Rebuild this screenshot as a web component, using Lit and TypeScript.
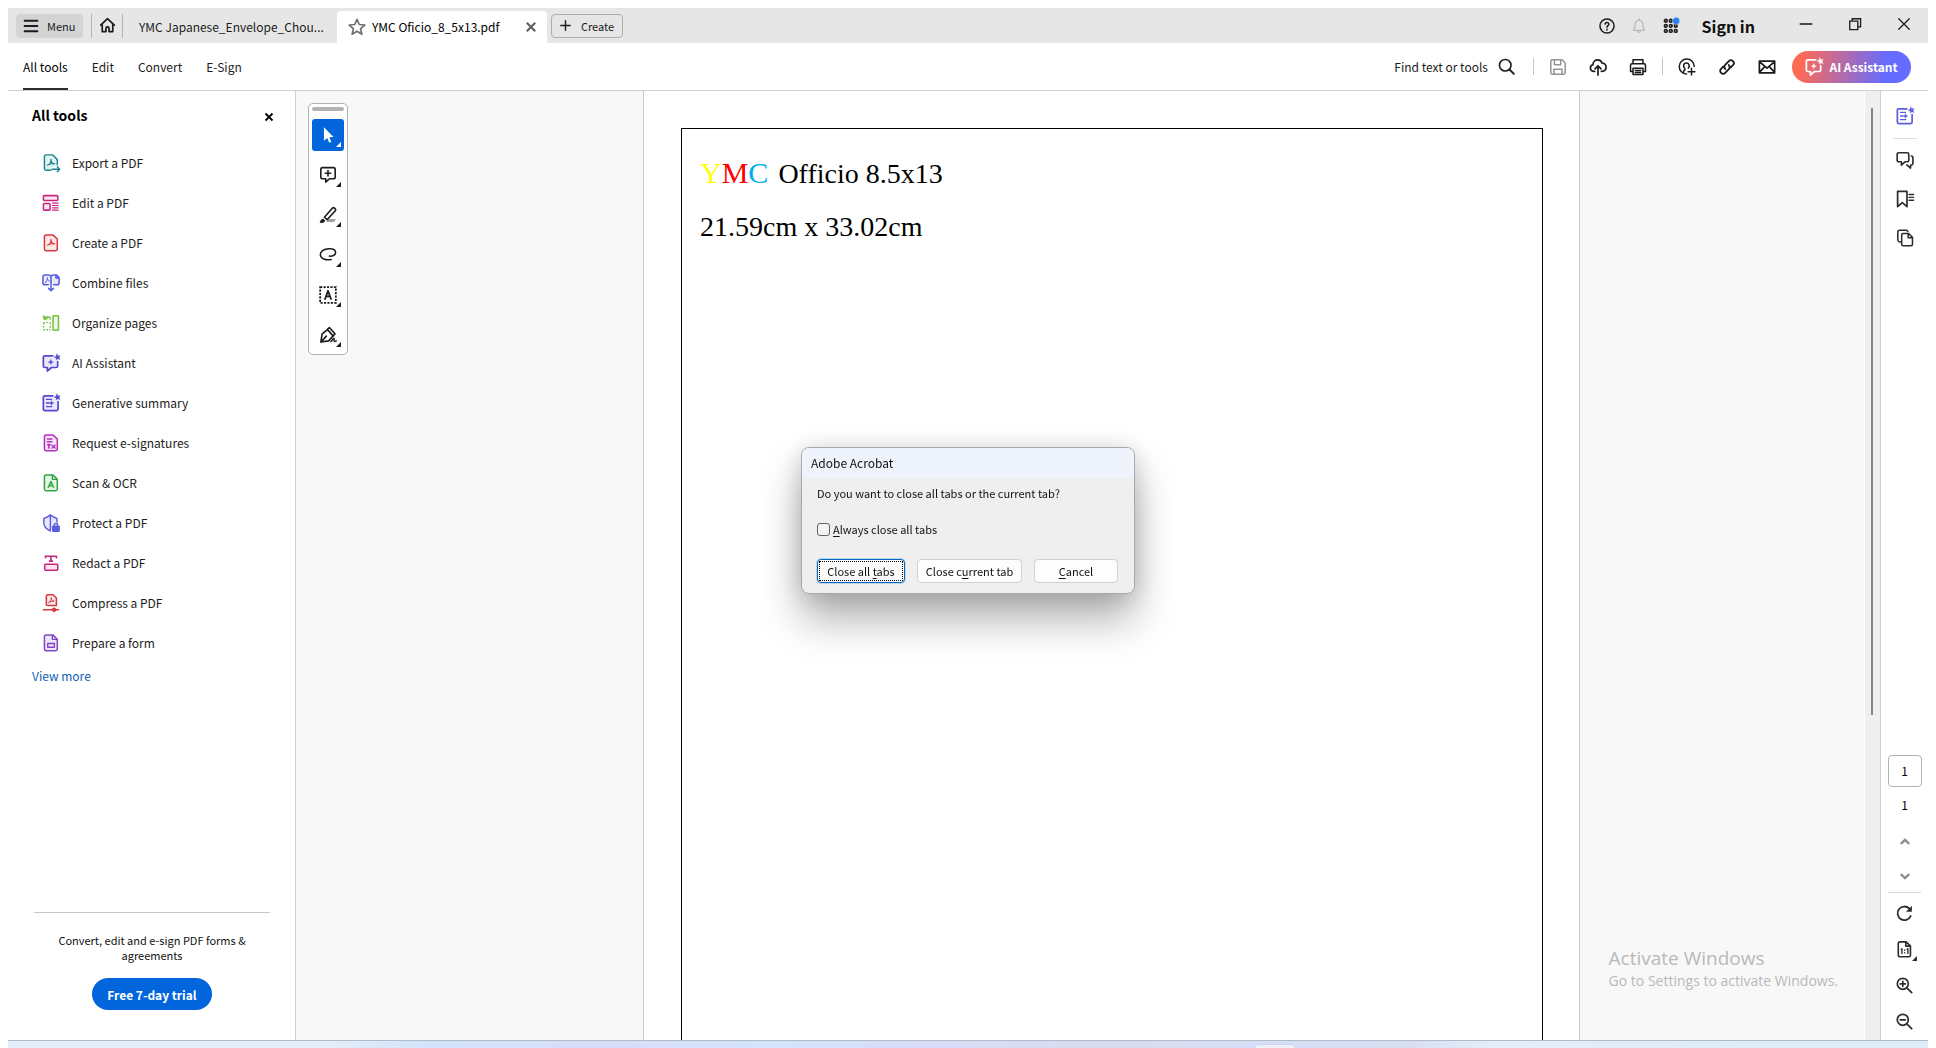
import { LitElement, html, css, svg } from "lit";
import { customElement, property } from "lit/decorators.js";
import { classMap } from "lit/directives/class-map.js";

/* Icons are drawn on a 20 x 20 grid and take their colour from the text colour. */
const pdfMark = svg`<path d="M6 12.5c2.6-.8 4-3.300 4-6.500M10 6c0 2.500 1.400 4.500 4.200 5M6 12.500c2.400-1.400 5.200-2 8.200-1.500" fill="none" stroke-width="1.300"/>`;
const sparkle = svg`<path d="M16.600 0l1 2.200L20 1.600l-1 2.300 1 2.200-2.300-.8-1.800 1.400-.1-2.400-2.400-.8 2.100-1.100z" fill="currentColor" stroke="currentColor" stroke-width=".5"/>`;

const ICONS: Record<string, unknown> = {
  menu: svg`<path d="M2 3.500h16M2 10h16M2 16.500h16" stroke-width="2.400"/>`,
  home: svg`<path d="M2 9.500L10 2l8 7.500M3.800 8v9.200h4.400v-3.700a1.800 1.800 0 0 1 3.600 0v3.700h4.400V8" stroke-width="2"/>`,
  star: svg`<path d="M10 1.500l2.500 5.700 6.200.6-4.700 4.100 1.400 6.100L10 14.800 4.600 18 6 11.900 1.300 7.800l6.200-.6z" stroke-width="1.900"/>`,
  close: svg`<path d="M3 3l14 14M17 3L3 17" stroke-width="3.600" stroke-linecap="butt"/>`,
  thinclose: svg`<path d="M2.500 2.500l15 15M17.500 2.500l-15 15" stroke-width="1.900"/>`,
  plus: svg`<path d="M10 1.500v17M1.500 10h17" stroke-width="2.600"/>`,
  help: svg`<circle cx="10" cy="10" r="8.800" stroke-width="1.900"/><path d="M7.600 7.600c.3-2.600 4.900-2.500 4.700.2-.1 1.800-2.300 1.700-2.300 3.800M10 14.200v.8" stroke-width="1.900"/>`,
  bell: svg`<path d="M3 15.500c1.700-1.700 1.900-3.500 1.900-6.500 0-3.500 2-5.700 5.100-6.400 3.100.7 5.100 2.900 5.100 6.400 0 3 .2 4.800 1.900 6.500zM8 16c.2 2.600 3.800 2.600 4 0M10 1v1.600" stroke-width="1.800"/>`,
  grid: svg`<g stroke-width="2.100"><circle cx="3.500" cy="3.500" r="1.700"/><circle cx="9.700" cy="3.500" r="1.700"/><circle cx="3.500" cy="9.800" r="1.700"/><circle cx="9.700" cy="9.800" r="1.700"/><circle cx="15.900" cy="9.800" r="1.700"/><circle cx="3.500" cy="16.100" r="1.700"/><circle cx="9.700" cy="16.100" r="1.700"/><circle cx="15.900" cy="16.100" r="1.700"/></g><circle cx="16.500" cy="3.600" r="4.500" fill="#2680eb" stroke="#e6e6e6" stroke-width=".6"/>`,
  minimize: svg`<path d="M1 10h18" stroke-width="2.200" stroke-linecap="butt"/>`,
  restore: svg`<path d="M2.500 6h11.500v12H2.500zM6 6V2.500h12v11.500h-4" stroke-width="1.900" stroke-linejoin="miter"/>`,
  search: svg`<circle cx="8.500" cy="8.500" r="6.800" stroke-width="1.900"/><path d="M13.500 13.500l5.200 5.200" stroke-width="2.200"/>`,
  save: svg`<path d="M2 3.500Q2 2 3.500 2h11L18 5.500v11q0 1.500-1.500 1.500h-13Q2 18 2 16.500zM6 2v5.500h7V2M5.500 18v-5.500h9V18" stroke-width="1.700"/>`,
  cloud: svg`<path d="M6.300 14.800H5a3.700 3.700 0 0 1-.6-7.300C4.500 3.900 7.100 2 9.700 2c2.300 0 4.200 1.400 4.800 3.700 2.700 0 4.500 2 4.500 4.400 0 2.700-1.900 4.700-4.600 4.700h-.7M10 19V9M6.700 12L10 8.600l3.300 3.400" stroke-width="1.900"/>`,
  print: svg`<path d="M4.500 6.500V2h11v4.500M4.500 15H1.700V8q0-1.500 1.500-1.500h13.600q1.500 0 1.500 1.500v7h-2.800M4.500 11.500h11v6.800h-11zM7 14h6M7 16h6" stroke-width="1.700"/>`,
  share: svg`<path d="M9.500 17.800A8.300 8.300 0 1 1 18 9.500M6.300 15.500v-1.200c2-.9 1.800-1.700 1-2.800-1.900-2.700-1.200-6 2-6s4 3.300 2.200 5.700M15 11.500v7.500M11.200 15.300h7.600" stroke-width="1.700"/>`,
  link: svg`<path d="M8 12.200c-1.500-1.600-1.300-3.300 0-4.600l4-4.100c1.400-1.400 3.300-1.300 4.600 0s1.400 3.100 0 4.500l-2.300 2.400M12 7.800c1.500 1.600 1.300 3.300 0 4.600l-4 4.100c-1.400 1.400-3.300 1.300-4.600 0S2 13.400 3.400 12l2.300-2.400" stroke-width="2"/>`,
  mail: svg`<path d="M1.500 3.500h17v13h-17zM1.500 4l8.500 7.300L18.500 4M1.500 16l6-6.500M18.500 16l-6-6.500" stroke-width="1.900"/>`,
  ai: svg`<path d="M12 2H3.200Q1.500 2 1.500 3.700v9.600Q1.500 15 3.200 15H6v4l4.500-4h5.200q1.700 0 1.700-1.700V8.500" stroke-width="1.900" fill="var(--tint, none)"/><path d="M9.800 6.500l.7 1.900 2 .6-2 .8-.7 1.900-.8-1.900-2-.8 2-.6z" fill="currentColor" stroke-width=".6"/>${sparkle}`,
  summary: svg`<path d="M12 2H3.200Q1.500 2 1.500 3.700v13.100q0 1.700 1.700 1.700h13q1.700 0 1.700-1.700V8.500" stroke-width="1.900" fill="var(--tint, none)"/><path d="M5 6h5.500M5 10h2.500M5 14h6" stroke-width="1.500"/><path d="M10.500 7.700l.8 1.700 1.900.6-1.900.8-.8 1.800-.8-1.800-1.900-.8 1.900-.6z" fill="currentColor" stroke-width=".5"/>${sparkle}`,
  export: svg`<path d="M10 18H4.500Q2.700 18 2.700 16.200V2.800Q2.700 1 4.500 1H12l5 5v6" stroke-width="1.600" fill="var(--tint)"/>${pdfMark}<path d="M11.500 17h8M17 14.300l2.600 2.700-2.600 2.700" stroke-width="1.600"/>`,
  edit: svg`<rect x="1.600" y="1.800" width="16" height="5.400" rx="1" fill="var(--tint)"/><rect x="1.600" y="10.500" width="7.400" height="7.400" rx="1" fill="var(--tint)"/><path d="M11.700 10.200h6.300M11.700 12.800h6.300M11.700 15.400h6.300M11.700 18h6.300" stroke-width="1.300"/>`,
  pdf: svg`<path d="M4.500 1H12l5 4.500v11.200q0 1.800-1.800 1.800H4.500q-1.800 0-1.800-1.800V2.800Q2.700 1 4.500 1z" fill="var(--tint)"/>${pdfMark}`,
  combine: svg`<path d="M7 12H3Q1 12 1 10V3Q1 1 3 1h4.500Q9 1 10 2.500 11 1 12.500 1H16l3 3v6q0 2-2 2h-4M15.500 1.200v3.300H19" fill="var(--tint)"/><path d="M3.500 9.500c1.600-.6 2.500-2.200 2.500-5M6 4.500c0 2 1 3 2.200 3.500" stroke-width="1"/><path d="M10 3v15.500M7.300 16l2.700 2.700 2.700-2.700"/>`,
  organize: svg`<rect x="12.300" y="2" width="6" height="16" rx=".6" fill="var(--tint)"/><path d="M1.500 9.500h8M1.500 17.500h8M1.800 10v7.500M9.300 10v7.500" stroke-dasharray="1.800 1.600" stroke-width="1.500" stroke-linecap="butt"/><path d="M9.500 5.500c-1-3-4.500-3.300-6.500-.5" stroke-width="1.700"/><path d="M1.300 2.200l1 4.200 3.900-1.200z" fill="currentColor" stroke-width="1"/>`,
  sign: svg`<path d="M4.500 1H12l5 4.500v11.200q0 1.800-1.800 1.800H4.500q-1.800 0-1.800-1.800V2.800Q2.700 1 4.500 1z" fill="var(--tint)"/><path d="M6 5.500h5M6 8.500h5M7.700 11.500v4.200M6.200 12h3M11.200 12.500l3.300 3M14.500 12.500l-3.300 3" stroke-width="1.700"/>`,
  scan: svg`<path d="M4.500 1H12l5 5v10.700q0 1.800-1.800 1.800H4.500q-1.800 0-1.800-1.800V2.800Q2.700 1 4.500 1z" fill="var(--tint)"/><path d="M11.500 1.500V6H17M6.800 15L9.900 8.200 13 15M7.800 13h4.200" stroke-width="1.500"/>`,
  shield: svg`<path d="M9.300 19C4 16.500 2 13.500 2 9.500V4.800C4.800 4 7 3 9.300 1c2.300 2 4.500 3 7.300 3.800V9M9.300 1v18" stroke-width="1.600" fill="var(--tint)"/><path d="M13.500 14v-1.400a2 2 0 0 1 4 0V14" stroke-width="1.500"/><rect x="12" y="13.600" width="7" height="5.600" rx=".7" fill="currentColor"/>`,
  redact: svg`<path d="M4 4V2.500h12V4M10 2.500v5.200M8.500 8h3" stroke-width="1.900" stroke-linejoin="miter"/><rect x="3" y="11.500" width="14.500" height="6.500" rx="1" fill="var(--tint)"/>`,
  compress: svg`<path d="M6.300.9h6l3.700 3.500v8.400H6.300q-1.500 0-1.500-1.500V2.400Q4.800.9 6.300.9z" fill="var(--tint)"/><path d="M7.600 9.500c1.800-.8 2.700-2.500 2.600-5M10.200 4.500c.1 2 1.200 3 2.900 3.500M7.600 9.500C9 8.400 11 7.800 13.100 8" stroke-width="1"/><path d="M1.500 17.500h17M13 15.700l-2 1.800 2 1.800M14 15.700l2 1.800-2 1.800" stroke-width="1.500"/>`,
  form: svg`<path d="M4.500 1H12l5 5v10.700q0 1.800-1.800 1.800H4.500q-1.800 0-1.800-1.800V2.800Q2.700 1 4.500 1z" fill="var(--tint)"/><path d="M11.500 1.500V6H17M6.300 10.500h7.500v4.200H6.300z" stroke-width="1.500"/>`,
  pointer: svg`<path d="M5.500 1.500v15l3.600-3.200 2.300 5.200 2.300-1-2.300-5 4.700-.3z" fill="currentColor" stroke="none"/>`,
  comment: svg`<path d="M4 1.800h12q2 0 2 2v8.400q0 2-2 2h-4.500L7.500 18v-3.800H4q-2 0-2-2V3.800q0-2 2-2zM10 5v6M7 8h6" stroke-width="1.800"/>`,
  marker: svg`<path d="M8 17.800L11 14.500h8l-2.500 3.300z" fill="#a0a0a0" stroke="none"/><path d="M6 12.500L15 2.300q1-1 2.200 0l.9.900q1 1 0 2.100L9 15.300zM6 12.500l3 2.800" stroke-width="1.800"/><path d="M1.500 18l1-2.500 2-1 2 2-1.500 1.500z" fill="currentColor" stroke-width="1"/>`,
  lasso: svg`<path d="M11.500 11.200c3 .4 7-.9 7-4 0-3.700-4.500-4.600-8-4.100C5 3.800 1.500 6.500 1.500 9.800c0 4.300 6 6.200 12 5.200" stroke-width="1.700"/>`,
  textbox: svg`<rect x="1.300" y="1.300" width="17.400" height="17.400" stroke-dasharray="2.400 1.400" stroke-linecap="butt" stroke-width="2" stroke-linejoin="miter"/><path d="M6.700 14.500L10 5.300l3.300 9.200M7.900 11.500h4.200" stroke-width="2"/>`,
  pen: svg`<path d="M2 17.800l1.500-9L9.500 4l6.200 7-5 5.500zM2.200 17.600l6-6.400M8.800 4.200l2.700-2.500 6.300 7-2 2.400" stroke-width="1.800"/><path d="M13 17.500c2-1 2.500-4 3.500-4s-.5 3.500.5 3.700 1.500-.7 2.500-.7" stroke-width="1.500"/>`,
  chats: svg`<path d="M3 2h9.500q1.700 0 1.700 1.700v6.600q0 1.700-1.700 1.700H10l-4 3.700V12H3q-1.700 0-1.700-1.700V3.700Q1.300 2 3 2zM17 5.500q1.800 0 1.800 1.700v6.600q0 1.700-1.800 1.700h-.8V19L12 15.500" stroke-width="1.800"/>`,
  bookmark: svg`<path d="M1.800 1.500h10.400v17L7 14l-5.200 4.500z" stroke-width="1.900"/><path d="M14.500 5h5M14.500 8.200h5M14.500 11.400h5" stroke-width="1.500"/>`,
  copies: svg`<path d="M5.500 14.500H4.300Q2.300 14.500 2 12.500V3.500q0-2 2-2h7q1.500 0 2.300 1.200M8 5h6l4.300 4.300V17q0 1.700-1.700 1.700H8q-1.700 0-1.700-1.700V6.700Q6.300 5 8 5zM13.500 5v4.800h4.800" stroke-width="1.700"/>`,
  up: svg`<path d="M3 13l7-6.500 7 6.500" stroke-width="4" stroke-linecap="butt" stroke-linejoin="miter"/>`,
  down: svg`<path d="M3 7l7 6.500L17 7" stroke-width="4" stroke-linecap="butt" stroke-linejoin="miter"/>`,
  rotate: svg`<path d="M17.200 13a8 8 0 1 1-1.500-8.700" stroke-width="2.100"/><path d="M18.700 1v7h-7z" fill="currentColor" stroke="none"/>`,
  actual: svg`<path d="M4.500 1H12l5 5v10.700q0 1.800-1.800 1.800H4.500q-1.800 0-1.800-1.800V2.800Q2.700 1 4.500 1zM11.500 1.500V6H17" stroke-width="1.900"/><path d="M6 9.700l1-.5v5.600M13 9.700l1-.5v5.600M10.200 10.500v.4M10.200 13.600v.4" stroke-width="1.600"/>`,
  zoomin: svg`<circle cx="8" cy="8" r="6.500" stroke-width="2"/><path d="M13 13l5.500 5.500M8 5v6M5 8h6" stroke-width="2"/>`,
  zoomout: svg`<circle cx="8" cy="8" r="6.500" stroke-width="2"/><path d="M13 13l5.500 5.500M5 8h6" stroke-width="2"/>`,
};

@customElement("app-icon")
class AppIcon extends LitElement {
  static styles = css`
    :host { display: inline-flex; flex: none; width: 18px; height: 18px; }
    .glyph {
      width: 100%; height: 100%; overflow: visible;
      fill: none; stroke: currentColor; stroke-width: 1.700;
      stroke-linecap: round; stroke-linejoin: round;
    }
  `;
  @property() name = "";
  render() {
    return html`<svg class="glyph" viewBox="0 0 20 20" aria-hidden="true">${ICONS[this.name]}</svg>`;
  }
}

const TOOLS = [
  { label: "Export a PDF", icon: "export", tone: "teal" },
  { label: "Edit a PDF", icon: "edit", tone: "pink" },
  { label: "Create a PDF", icon: "pdf", tone: "red" },
  { label: "Combine files", icon: "combine", tone: "indigo" },
  { label: "Organize pages", icon: "organize", tone: "lime" },
  { label: "AI Assistant", icon: "ai", tone: "violet" },
  { label: "Generative summary", icon: "summary", tone: "violet" },
  { label: "Request e-signatures", icon: "sign", tone: "magenta" },
  { label: "Scan & OCR", icon: "scan", tone: "green" },
  { label: "Protect a PDF", icon: "shield", tone: "indigo" },
  { label: "Redact a PDF", icon: "redact", tone: "pink" },
  { label: "Compress a PDF", icon: "compress", tone: "red" },
  { label: "Prepare a form", icon: "form", tone: "purple" },
];

const QUICK_TOOLS = [
  { label: "Select", icon: "pointer" },
  { label: "Add comment", icon: "comment" },
  { label: "Highlight", icon: "marker" },
  { label: "Draw freeform", icon: "lasso" },
  { label: "Text box", icon: "textbox" },
  { label: "Sign", icon: "pen" },
];

@customElement("app-root")
class AppRoot extends LitElement {
  static styles = css`
    :host {
      display: block;
      font-family: "Noto Sans CJK SC", "Open Sans", sans-serif;
      font-size: 12px;
      line-height: 16px;
      color: #1c1c1c;
      background: #fff;
    }
    *, *::before, *::after { box-sizing: border-box; }
    button, input { font: inherit; color: inherit; margin: 0; }
    button { background: none; border: 0; padding: 0; cursor: pointer; white-space: nowrap; }
    a { color: inherit; text-decoration: none; }
    h2, p { margin: 0; }
    .icon-button { display: inline-flex; align-items: center; justify-content: center; }

    .window { min-height: 100vh; padding: 8px 8px 0; display: flex; flex-direction: column; }

    .titlebar { display: flex; height: 35px; background: #e6e6e6; padding-left: 8px; align-items: center; }
    .menu {
      display: flex; align-items: center; gap: 8px; height: 24px; width: 67px;
      padding-left: 7px; margin-right: 8px; border-radius: 4px; background: #d4d4d4; font-size: 11px;
    }
    .menu app-icon { width: 16px; height: 16px; }
    .home { width: 32px; height: 24px; border: solid #b5b5b5; border-width: 0 1px; }
    .home app-icon { width: 17px; height: 17px; }
    .tab { width: 214px; height: 32px; text-align: left; padding-left: 16px; align-self: flex-end; }
    .tab-active {
      display: flex; align-items: center; gap: 6px; width: 210px; height: 32px; align-self: flex-end;
      padding: 0 10px 0 11px; background: #fff; border-radius: 4px 4px 0 0; color: #000; white-space: nowrap;
    }
    .tab-active > app-icon { width: 18px; height: 18px; color: #707070; }
    .tab-title { flex: 1; }
    .tab-close { color: #606060; width: 12px; height: 20px; }
    .tab-close app-icon { width: 12px; height: 12px; }
    .create {
      display: flex; align-items: center; justify-content: center; gap: 10px; width: 72px; height: 24px;
      margin-left: 4px; border: 1px solid #acacac; border-radius: 4px; font-size: 11px;
    }
    .create app-icon { width: 11px; height: 11px; }
    .account { display: flex; align-items: center; margin-left: auto; }
    .account .icon-button { width: 32px; height: 28px; }
    .account .muted { color: #bcbcbc; }
    .account app-icon { width: 16px; height: 16px; }
    .sign-in { font-size: 16px; font-weight: 700; color: #111; padding: 0 26px 0 15px; }
    .account .win { width: 49px; padding-bottom: 4px; }
    .win app-icon { width: 14px; height: 14px; }

    .toolbar { display: flex; height: 48px; padding-right: 17px; border-bottom: 1px solid #d1d1d1; align-items: center; }
    .tabs { display: flex; align-self: stretch; gap: 24px; padding-left: 15px; }
    .tabs a { display: flex; align-items: center; padding-top: 2px; border-bottom: 2px solid transparent; }
    .tabs .current { border-color: #2c2c2c; color: #000; }
    .actions { display: flex; align-items: center; margin-left: auto; }
    .find { display: flex; align-items: center; gap: 10px; padding-right: 14px; }
    .find app-icon { width: 17px; height: 17px; }
    .actions .icon-button { width: 40px; height: 32px; }
    .actions .disabled { color: #959595; }
    .rule { width: 1px; height: 17px; background: #c6c6c6; margin: 0 4px; }
    .ai-button {
      display: flex; align-items: center; justify-content: center; gap: 6px; width: 119px; height: 32px;
      margin-left: 5px; border-radius: 16px; color: #fff; font-weight: 700;
      background: linear-gradient(100deg, #ff6a55 8%, #656cff 78%);
    }

    .body { flex: 1; display: flex; }

    .sidebar { flex: none; width: 288px; display: flex; flex-direction: column; border-right: 1px solid #cfcfcf; }
    .side-head { display: flex; justify-content: space-between; padding: 15px 20px 0 24px; height: 53px; color: #000; }
    .side-head h2 { font-size: 14px; line-height: 18px; font-weight: 700; }
    .side-head .icon-button { width: 12px; height: 22px; }
    .side-head app-icon { width: 10px; height: 10px; }
    .tools { list-style: none; margin: 0; padding: 0 0 0 34px; }
    .tools button { display: flex; align-items: center; gap: 12px; height: 40px; width: 100%; padding-bottom: 2px; }
    .teal { color: #14868c; --tint: #e3f2f2; }
    .pink { color: #c9257f; --tint: #fae6f1; }
    .red { color: #d7373f; --tint: #fde8e8; }
    .indigo { color: #5c5ce0; --tint: #e9e9fc; }
    .lime { color: #79c143; --tint: #edf7e4; }
    .violet { color: #5548cf; --tint: #eae8fb; }
    .magenta { color: #b130bd; --tint: #f7e6f9; }
    .green { color: #35a344; --tint: #e5f5e8; }
    .purple { color: #8048c5; --tint: #eee6f8; }
    .more { padding: 4px 24px; color: #0d5fb8; }
    .promo {
      display: flex; flex-direction: column; align-items: center; margin: auto 25px 0 26px; padding: 20px 16px 30px;
      border-top: 1px solid #c6c6c6; text-align: center; font-size: 11px; line-height: 15px; color: #111;
    }
    .trial {
      width: 120px; height: 32px; margin-top: 15px; border-radius: 16px; background: #0265dc; color: #fff;
      font-size: 12px; font-weight: 700;
    }

    .viewer {
      flex: 1; position: relative; display: grid; grid-template-columns: 347fr 937fr 284fr; background: #f8f8f8;
    }
    .quick {
      width: 40px; height: 252px; margin: 12px 0 0 12px; padding: 3px 3px 0; background: #fff;
      border: 1px solid #b0b0b0; border-radius: 5px;
    }
    .grip { height: 4px; border-radius: 2px; background: #b3b3b3; margin: 0 0 4px; }
    .quick .icon-button { position: relative; width: 32px; height: 40px; }
    .quick .selected { background: #0265dc; color: #fff; border-radius: 3px; height: 32px; margin: 4px 0; }
    .corner::after {
      content: ""; position: absolute; right: 3px; bottom: 8px; border-style: solid;
      border-width: 0 0 5px 5px; border-color: transparent transparent currentColor;
    }
    .selected.corner::after { bottom: 4px; }
    .sheet { background: #fff; border: solid #c8c8c8; border-width: 0 1px; padding: 37px 36px 0 37px; display: flex; }
    .frame {
      flex: 1; border: 1px solid #000; border-bottom: 0; padding: 28px 18px;
      font: 28px/32px "Liberation Serif", serif; color: #000;
    }
    .frame p { margin-bottom: 21px; }
    .ymc { font-size: 30px; margin-right: 3px; }
    .y { color: #ff0; } .m { color: #f00; } .c { color: #00aeef; }
    .watermark {
      position: absolute; right: 26px; bottom: 49px; color: #b9b9b9;
      font: 14px/20px "Open Sans", sans-serif;
    }
    .watermark .big { font-size: 19px; line-height: 25px; }

    .scroll { flex: none; width: 17px; padding: 17px 8px 0 6px; background: #efefef; border-left: 1px solid #fff; border-right: 1px solid #cfcfcf; }
    .thumb { width: 2px; height: 607px; background: #858585; }

    .rail { flex: none; width: 47px; display: flex; flex-direction: column; align-items: center; color: #2c2c2c; }
    .rail .icon-button { position: relative; width: 32px; height: 39px; }
    .rail .accent { height: 50px; color: #5c5ce0; margin-bottom: -3px; }
    .rail .line { width: 24px; height: 1px; background: #dcdcdc; margin-bottom: 1px; }
    .rail .wide { width: 33px; margin: -1px 0 2px; }
    .page-input {
      width: 34px; height: 32px; margin-top: auto; border: 1px solid #b1b1b1; border-radius: 4px;
      text-align: center; background: #fff; color: #000; padding: 0 0 2px;
    }
    .total { height: 38px; line-height: 36px; color: #000; }
    .rail .nav { height: 34px; color: #8e8e8e; }
    .nav app-icon { width: 12px; height: 12px; }
    .rail .tail { height: 36px; }
    .rail .tail.corner::after { right: 4px; bottom: 6px; }
    .tail app-icon { width: 17px; height: 17px; }
    .rail-end { height: 1px; }

    .taskbar {
      height: 8px; border-top: 1px solid #b2bac6; display: flex; align-items: flex-end; padding-left: 65%;
      background: linear-gradient(90deg, #e1edf8 0, #e1edf8 17%, #d2e4fb 22%, #d8def8 31%, #d3e5fc 40%, #d8dcf7 48%, #d9dcef 58%, #d5dff8 66%, #d9dff2 73%, #e1edf9 77%, #dfecfa 100%);
    }
    .task-item { width: 38px; height: 4px; border-radius: 3px 3px 0 0; background: #edf1fa; border-top: 1px solid #d0d5e6; }

    .overlay { position: fixed; inset: 0; display: grid; place-items: center; padding-bottom: 7px; pointer-events: none; }
    .dialog {
      width: 334px; pointer-events: auto; background: #efefef; border: 1px solid #a9a9a9; border-radius: 8px; overflow: hidden;
      color: #111; font-size: 11px; box-shadow: 0 26px 42px rgba(0, 0, 0, .3), 0 2px 24px rgba(0, 0, 0, .16);
    }
    .dialog h2 { height: 30px; background: #eff3fb; padding: 0 9px; font-size: 12px; line-height: 30px; font-weight: 400; }
    .dialog-body { padding: 7px 16px 10px 15px; }
    .check { display: flex; align-items: center; gap: 3px; margin: 20px 0 22px; }
    .check input {
      appearance: none; width: 13px; height: 13px; border: 1px solid #626262; border-radius: 3px; background: #f3f3f3;
    }
    .dialog-actions { display: flex; gap: 12px; }
    .dialog-actions button {
      height: 24px; background: #fdfdfd; border: 1px solid #d0d0d0; border-radius: 4px;
    }
    .w-all { width: 88px; } .w-current { width: 105px; } .w-cancel { width: 84px; }
    .dialog-actions .default { border: 1px solid #0067c0; padding: 1px; box-shadow: 0 0 0 1px #0067c033; }
    .focus { display: block; border: 1px dotted #000; line-height: 18px; }
    .key { text-decoration: underline; text-underline-offset: 2px; }
  `;

  private iconButton(icon: string, label: string, extra = "") {
    return html`<button class="icon-button ${extra}" aria-label=${label}><app-icon name=${icon}></app-icon></button>`;
  }

  render() {
    return html`
      <div class="window">
        <header class="titlebar">
          <button class="menu"><app-icon name="menu"></app-icon>Menu</button>
          ${this.iconButton("home", "Home", "home")}
          <button class="tab">YMC Japanese_Envelope_Chou...</button>
          <div class="tab-active">
            <app-icon name="star"></app-icon><span class="tab-title">YMC Oficio_8_5x13.pdf</span>
            ${this.iconButton("close", "Close tab", "tab-close")}
          </div>
          <button class="create"><app-icon name="plus"></app-icon>Create</button>
          <div class="account">
            ${this.iconButton("help", "Help")}
            ${this.iconButton("bell", "Notifications", "muted")}
            ${this.iconButton("grid", "Apps")}
            <button class="sign-in">Sign in</button>
            ${this.iconButton("minimize", "Minimize", "win")}
            ${this.iconButton("restore", "Restore", "win")}
            ${this.iconButton("thinclose", "Close", "win")}
          </div>
        </header>

        <div class="toolbar">
          <nav class="tabs">
            <a href="#tools" class="current">All tools</a><a href="#edit">Edit</a>
            <a href="#convert">Convert</a><a href="#esign">E-Sign</a>
          </nav>
          <div class="actions">
            <button class="find">Find text or tools<app-icon name="search"></app-icon></button>
            <span class="rule"></span>
            ${this.iconButton("save", "Save", "disabled")}
            ${this.iconButton("cloud", "Upload")}
            ${this.iconButton("print", "Print")}
            <span class="rule"></span>
            ${this.iconButton("share", "Share")}
            ${this.iconButton("link", "Copy link")}
            ${this.iconButton("mail", "Send by email")}
            <button class="ai-button"><app-icon name="ai"></app-icon>AI Assistant</button>
          </div>
        </div>

        <div class="body">
          <aside class="sidebar">
            <div class="side-head"><h2>All tools</h2>${this.iconButton("close", "Close panel")}</div>
            <ul class="tools">
              ${TOOLS.map(
                (t) => html`<li><button>
                  <app-icon class=${t.tone} name=${t.icon}></app-icon><span>${t.label}</span>
                </button></li>`
              )}
            </ul>
            <a class="more" href="#more">View more</a>
            <div class="promo">
              <p>Convert, edit and e-sign PDF forms &amp; agreements</p>
              <button class="trial">Free 7-day trial</button>
            </div>
          </aside>

          <main class="viewer">
            <div>
              <div class="quick">
                <div class="grip"></div>
                ${QUICK_TOOLS.map(
                  (t, i) => html`<button
                    class=${classMap({ "icon-button": true, corner: true, selected: i === 0 })}
                    aria-label=${t.label}><app-icon name=${t.icon}></app-icon></button>`
                )}
              </div>
            </div>
            <article class="sheet">
              <div class="frame">
                <p><span class="ymc"><span class="y">Y</span><span class="m">M</span><span class="c">C</span></span> Officio 8.5x13</p>
                <p>21.59cm x 33.02cm</p>
              </div>
            </article>
            <div class="watermark"><div class="big">Activate Windows</div>Go to Settings to activate Windows.</div>
          </main>

          <div class="scroll"><div class="thumb"></div></div>

          <aside class="rail">
            ${this.iconButton("summary", "Generative summary", "accent")}
            <div class="line"></div>
            ${this.iconButton("chats", "Comments")}
            ${this.iconButton("bookmark", "Bookmarks")}
            ${this.iconButton("copies", "Pages")}
            <input class="page-input" aria-label="Page number" value="1" />
            <div class="total">1</div>
            ${this.iconButton("up", "Previous page", "nav")}
            ${this.iconButton("down", "Next page", "nav")}
            <div class="line wide"></div>
            ${this.iconButton("rotate", "Rotate", "tail")}
            ${this.iconButton("actual", "Page display", "tail corner")}
            ${this.iconButton("zoomin", "Zoom in", "tail")}
            ${this.iconButton("zoomout", "Zoom out", "tail")}
            <div class="rail-end"></div>
          </aside>
        </div>

        <footer class="taskbar"><div class="task-item"></div></footer>
      </div>

      <div class="overlay">
        <section class="dialog" role="dialog" aria-labelledby="dialog-title">
          <h2 id="dialog-title">Adobe Acrobat</h2>
          <div class="dialog-body">
            <p>Do you want to close all tabs or the current tab?</p>
            <label class="check"><input type="checkbox" /><span><span class="key">A</span>lways close all tabs</span></label>
            <div class="dialog-actions">
              <button class="default w-all"><span class="focus">Close all <span class="key">t</span>abs</span></button>
              <button class="w-current">Close c<span class="key">u</span>rrent tab</button>
              <button class="w-cancel"><span class="key">C</span>ancel</button>
            </div>
          </div>
        </section>
      </div>
    `;
  }
}
